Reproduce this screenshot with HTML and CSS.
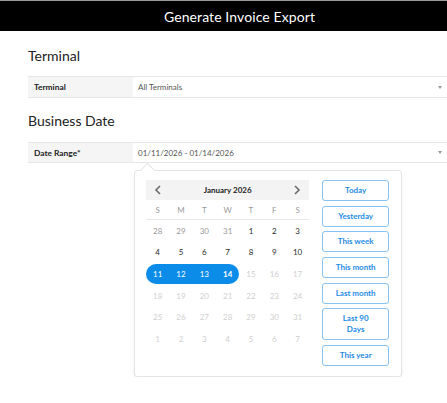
FILE: index.html
```html
<!DOCTYPE html>
<html>
<head>
<meta charset="utf-8">
<link rel="stylesheet" href="styles.css">
</head>
<body>
<header class="topbar"><span class="topbar-title">Generate Invoice Export</span></header>
<main class="content">
  <h2 class="section-title">Terminal</h2>
  <div class="field">
    <div class="field-label">Terminal</div>
    <div class="field-input"><span>All Terminals</span><span class="caret"></span></div>
  </div>
  <h2 class="section-title second">Business Date</h2>
  <div class="field date-field">
    <div class="field-label">Date Range*</div>
    <div class="field-input"><span>01/11/2026 - 01/14/2026</span><span class="caret"></span></div>
  </div>
  <div class="picker">
    <div class="calendar">
      <div class="cal-head">
        <svg class="chev" width="8" height="10" viewBox="0 0 8 10"><path d="M6 1 L2 5 L6 9" fill="none" stroke="#6b6b6b" stroke-width="1.6"/></svg>
        <span class="month">January 2026</span>
        <svg class="chev" width="8" height="10" viewBox="0 0 8 10"><path d="M2 1 L6 5 L2 9" fill="none" stroke="#6b6b6b" stroke-width="1.6"/></svg>
      </div>
      <div class="dow">
        <span>S</span><span>M</span><span>T</span><span>W</span><span>T</span><span>F</span><span>S</span>
      </div>
      <div class="days">
        <span class="d off">28</span><span class="d off">29</span><span class="d off">30</span><span class="d off">31</span><span class="d">1</span><span class="d">2</span><span class="d">3</span>
        <span class="d">4</span><span class="d">5</span><span class="d">6</span><span class="d">7</span><span class="d">8</span><span class="d">9</span><span class="d">10</span>
        <span class="d sel start">11</span><span class="d sel">12</span><span class="d sel">13</span><span class="d sel end">14</span><span class="d dis">15</span><span class="d dis">16</span><span class="d dis">17</span>
        <span class="d dis">18</span><span class="d dis">19</span><span class="d dis">20</span><span class="d dis">21</span><span class="d dis">22</span><span class="d dis">23</span><span class="d dis">24</span>
        <span class="d dis">25</span><span class="d dis">26</span><span class="d dis">27</span><span class="d dis">28</span><span class="d dis">29</span><span class="d dis">30</span><span class="d dis">31</span>
        <span class="d dis">1</span><span class="d dis">2</span><span class="d dis">3</span><span class="d dis">4</span><span class="d dis">5</span><span class="d dis">6</span><span class="d dis">7</span>
      </div>
    </div>
    <div class="ranges">
      <button class="range">Today</button>
      <button class="range">Yesterday</button>
      <button class="range">This week</button>
      <button class="range">This month</button>
      <button class="range">Last month</button>
      <button class="range tall">Last 90<br>Days</button>
      <button class="range">This year</button>
    </div>
  </div>
</main>
</body>
</html>
```
FILE: styles.css
```css
* { box-sizing: border-box; }
body {
  margin: 0;
  font-family: Lato, "Open Sans", sans-serif;
  color: #222;
  background: #fff;
}
.topbar {
  height: 31px;
  background: #000;
  border-top: 1px solid #9a9a9a;
  display: flex;
  align-items: center;
  justify-content: center;
  padding-left: 32px;
}
.topbar-title {
  color: #fff;
  font-size: 14px;
  letter-spacing: 0.1px;
}
.content {
  padding-left: 28px;
}
.section-title {
  margin: 16px 0 0;
  font-size: 14px;
  line-height: 18px;
  font-weight: 400;
  color: #222;
}
.section-title.second { margin-top: 14px; }
.field {
  margin-top: 11px;
  display: flex;
  height: 22px;
  border-top: 1px solid #e6e6e6;
  border-bottom: 1px solid #e6e6e6;
  font-size: 8px;
}
.date-field { margin-top: 12px; height: 21px; }
.field-label {
  width: 105px;
  background: #f5f5f5;
  font-weight: 700;
  font-size: 8.4px;
  padding-left: 6px;
  display: flex;
  align-items: center;
  color: #222;
}
.field-input {
  flex: 1;
  display: flex;
  align-items: center;
  justify-content: space-between;
  padding: 0 5px 0 5px;
  color: #555;
}
.caret {
  width: 0;
  height: 0;
  border-left: 2.5px solid transparent;
  border-right: 2.5px solid transparent;
  border-top: 3px solid #9a9a9a;
}
.picker {
  position: relative;
  margin: 7px 0 0 106px;
  width: 268px;
  height: 207px;
  background: #fff;
  border: 1px solid #e4e4e4;
  border-radius: 3px;
  box-shadow: 0 1px 3px rgba(0,0,0,0.06);
  display: flex;
  padding: 9px 12px 0 11px;
  gap: 13px;
}
.picker::before {
  content: "";
  position: absolute;
  left: 7px;
  top: -6px;
  width: 10px;
  height: 10px;
  background: #fff;
  border-left: 1px solid #e4e4e4;
  border-top: 1px solid #e4e4e4;
  transform: rotate(45deg);
}
.calendar { width: 164px; }
.cal-head {
  height: 20px;
  background: #f3f3f3;
  display: flex;
  align-items: center;
  justify-content: space-between;
  padding: 0 8px 0 8px;
}
.month {
  font-size: 8px;
  font-weight: 700;
  color: #222;
}
.dow {
  display: grid;
  grid-template-columns: repeat(7, 1fr);
  height: 20px;
  align-items: center;
  border-bottom: 1px solid #e6e6e6;
  font-size: 8px;
  color: #9a9a9a;
  text-align: center;
}
.days {
  display: grid;
  grid-template-columns: repeat(7, 1fr);
  grid-auto-rows: 21.6px;
  align-items: center;
  font-size: 8px;
  text-align: center;
  color: #2a2a2a;
}
.d { height: 20px; line-height: 20px; }
.d.off { color: #9a9a9a; }
.d.dis { color: #cfcfcf; }
.d.sel { background: #0b8ce9; color: #fff; }
.d.start { border-radius: 10px 0 0 10px; }
.d.end { border-radius: 0 10px 10px 0; font-weight: 700; }
.ranges {
  width: 67px;
  display: flex;
  flex-direction: column;
  gap: 4.7px;
}
.range {
  height: 21px;
  flex: none;
  margin: 0;
  padding: 0;
  background: #fff;
  border: 1px solid #86c3f2;
  border-radius: 3px;
  color: #1e8be6;
  font-family: Lato, "Open Sans", sans-serif;
  font-size: 8px;
  font-weight: 700;
  line-height: 11px;
}
.range.tall { height: 32px; }
```
